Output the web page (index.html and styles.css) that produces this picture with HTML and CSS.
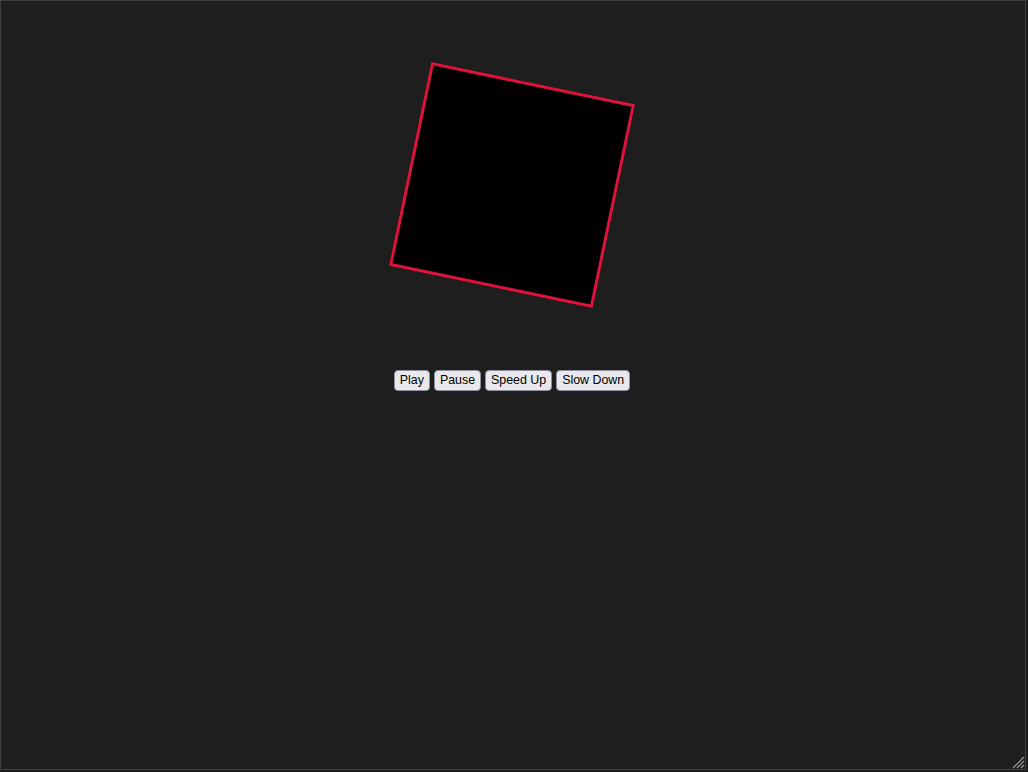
FILE: index.html
```html
<!DOCTYPE html>
<html>
<head>
<meta charset="utf-8">
<link rel="stylesheet" href="styles.css">
</head>
<body>
<div class="frame">
  <div class="stage">
    <div class="square"></div>
  </div>
  <div class="controls">
    <button class="btn">Play</button>
    <button class="btn">Pause</button>
    <button class="btn">Speed Up</button>
    <button class="btn">Slow Down</button>
  </div>
  <svg class="grip" width="14" height="14" viewBox="0 0 14 14">
    <line x1="13" y1="2" x2="2" y2="13" stroke="#9a9a9a" stroke-width="1.2"/>
    <line x1="13" y1="6" x2="6" y2="13" stroke="#9a9a9a" stroke-width="1.2"/>
    <line x1="13" y1="10" x2="10" y2="13" stroke="#9a9a9a" stroke-width="1.2"/>
  </svg>
</div>
</body>
</html>
```
FILE: styles.css
```css
html, body {
  margin: 0;
  padding: 0;
  background: #1e1e1e;
  height: 100%;
}
.frame {
  position: relative;
  box-sizing: border-box;
  width: 1026px;
  height: 770px;
  border: 1px solid #3f3f3f;
  background: #1e1e1e;
  display: flex;
  flex-direction: column;
  align-items: center;
  padding-top: 80px;
}
.stage {
  width: 208px;
  height: 208px;
  margin-right: 2px;
}
.square {
  box-sizing: border-box;
  width: 208px;
  height: 208px;
  background: #020000;
  border: 3px solid #dc143c;
  transform: rotate(11.75deg);
}
.controls {
  margin-top: 81px;
  margin-right: 2px;
  display: flex;
  gap: 4px;
}
.btn {
  box-sizing: border-box;
  height: 21px;
  padding: 1px 5px;
  font-family: "Liberation Sans", Arial, sans-serif;
  font-size: 12.4px;
  color: #000;
  background: #e9e9ed;
  border: 1px solid #8f8f9d;
  border-radius: 4px;
  line-height: 17px;
}
.grip {
  position: absolute;
  right: 0;
  bottom: 0;
}
```
